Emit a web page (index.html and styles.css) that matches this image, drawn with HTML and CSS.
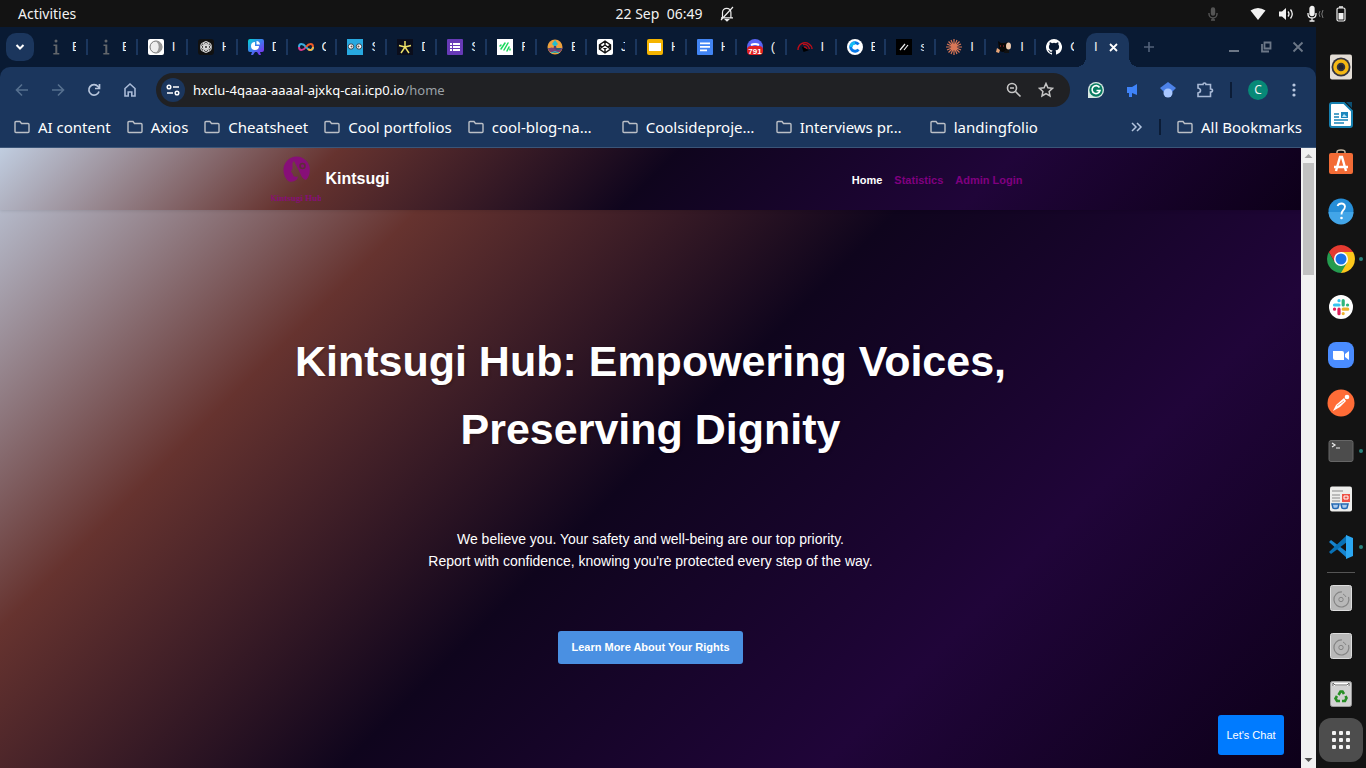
FILE: index.html
```
<!DOCTYPE html>
<html lang="en">
<head>
<meta charset="utf-8">
<title>Kintsugi Hub</title>
<link rel="stylesheet" href="styles.css">
</head>
<body>
<header class="topbar">
  <button class="activities">Activities</button>
  <div class="clock"><span>22 Sep&nbsp; 06:49</span>
    <svg width="14" height="16" viewBox="0 0 14 16" fill="none" stroke="#eee" stroke-width="1.2"><path d="M2.500 11.500V6.500a4.200 4.200 0 0 1 8.400 0v5M1 11.800h12M13 1 1 14"/><path d="M5.500 13.500h3l-1.500 1.500z" fill="#eee"/></svg>
  </div>
  <div class="status">
    <svg class="mic-dim" width="12" height="16" viewBox="0 0 12 16" fill="none" stroke="#555" stroke-width="1.4"><rect x="4.500" y="2" width="3" height="7" rx="1.500" fill="#555"/><path d="M2 7v1a4 4 0 0 0 8 0V7M6 12v2M4 14h4"/></svg>
    <svg width="16" height="16" viewBox="0 0 16 16" fill="#f2f2f2"><path d="M8 14 .5 4.500Q8-.5 15.500 4.500z"/></svg>
    <svg width="16" height="16" viewBox="0 0 16 16" fill="none" stroke="#f2f2f2" stroke-width="1.300"><path d="M1 5.500h3L8 2v12L4 10.500H1z" fill="#f2f2f2" stroke="none"/><path d="M10 5.500q2 2.500 0 5M12.500 3.500q3.500 4.500 0 9"/></svg>
    <svg width="18" height="18" viewBox="0 0 18 18" fill="none" stroke="#f2f2f2" stroke-width="1.300"><rect x="4" y="1.500" width="4" height="9" rx="2" fill="#f2f2f2"/><path d="M2 8v1q0 4 4 4t4-4V8M6 13v3M3.500 16h5"/><path d="M14 6q-2 3 0 6M17 5q-2.500 4 0 8" stroke="#777" stroke-width="1"/></svg>
    <svg width="10" height="16" viewBox="0 0 10 16" fill="none" stroke="#f2f2f2" stroke-width="1.200"><rect x="1" y="2" width="8" height="13" rx="1.500"/><path d="M3 1h4" stroke-width="1.500"/><path d="M2.500 7h5v6.500h-5z" fill="#f2f2f2" stroke="none"/></svg>
  </div>
</header>

<div class="desktop">
<div class="browser">
  <div class="tabstrip">
    <button class="tab-search" aria-label="Search tabs"><svg width="10" height="8" viewBox="0 0 10 8" fill="none" stroke="#fff" stroke-width="2"><path d="m1.500 2 3.500 3.500L8.500 2"/></svg></button>
    <div class="tabs">
      <div class="tab"><svg viewBox="0 0 16 16" fill="#62666b"><circle cx="8" cy="2" r="1.500"/><path d="M5.500 5.500h3.800V14h2v1.500h-6V14h2V7H5.500z"/></svg><span>E</span></div>
      <div class="tab"><svg viewBox="0 0 16 16" fill="#62666b"><circle cx="8" cy="2" r="1.500"/><path d="M5.500 5.500h3.800V14h2v1.500h-6V14h2V7H5.500z"/></svg><span>E</span></div>
      <div class="tab"><svg viewBox="0 0 16 16"><rect width="16" height="16" rx="2" fill="#fff"/><circle cx="8" cy="8" r="6" fill="#eee" stroke="#777"/><path d="M8 2a6 6 0 0 1 0 12 8 8 0 0 0 0-12z" fill="#999"/></svg><span>I</span></div>
      <div class="tab"><svg viewBox="0 0 16 16" fill="none" stroke="#ddd" stroke-width="1"><rect width="16" height="16" rx="3" fill="#111" stroke="none"/><ellipse cx="8" cy="6" rx="3" ry="3.500"/><ellipse cx="8" cy="6" rx="3" ry="3.500" transform="rotate(60 8 8)"/><ellipse cx="8" cy="6" rx="3" ry="3.500" transform="rotate(120 8 8)"/><ellipse cx="8" cy="6" rx="3" ry="3.500" transform="rotate(180 8 8)"/><ellipse cx="8" cy="6" rx="3" ry="3.500" transform="rotate(240 8 8)"/><ellipse cx="8" cy="6" rx="3" ry="3.500" transform="rotate(300 8 8)"/></svg><span>H</span></div>
      <div class="tab"><svg viewBox="0 0 16 16"><defs><linearGradient id="pie" x1="0" y1="0" x2="1" y2="1"><stop offset="0" stop-color="#00d5d0"/><stop offset=".5" stop-color="#4278f0"/><stop offset="1" stop-color="#8a22ef"/></linearGradient></defs><path d="M2 0h12q2 0 2 2v9q0 2-2 2h-2l1 3h-2l-2-3H7l-2 3H3l1-3H2q-2 0-2-2V2q0-2 2-2z" fill="url(#pie)"/><path d="M7 3v4h4a4 4 0 1 1-4-4z" fill="#fff"/><path d="M8.500 2a4 4 0 0 1 3.500 3.500H8.500z" fill="#fff"/></svg><span>D</span></div>
      <div class="tab"><svg viewBox="0 0 16 16" fill="none" stroke-width="2"><path d="M8 8c-3 4-7 4-7 0" stroke="#d83b8c"/><path d="M1 8c0-4 4-4 7 0s7 4 7 0" stroke="#3aaee0"/><path d="M8 8c3-4 7-4 7 0" stroke="#ec5a28"/><path d="M15 8c0 3-3 4-5 2" stroke="#f6b33d"/></svg><span>C</span></div>
      <div class="tab"><svg viewBox="0 0 16 16"><path fill="#28a9e0" d="M0 0h16v16H0z"/><g fill="#fff" stroke="#345"><circle cx="4" cy="7.500" r="2.700"/><circle cx="12" cy="7.500" r="2.700"/></g><circle cx="4.500" cy="7.500" r="1" fill="#654"/><circle cx="11.500" cy="7.500" r="1" fill="#654"/></svg><span>S</span></div>
      <div class="tab"><svg viewBox="0 0 16 16"><path fill="#0a0d1b" d="M0 0h16v16H0z"/><path d="M8 2v6M2 6.500 8 8l6-1.500M4 14l4-6 4 6" fill="none" stroke="#eee268" stroke-width="1.500"/></svg><span>D</span></div>
      <div class="tab"><svg viewBox="0 0 16 16"><rect width="16" height="16" rx="1" fill="#673ab7"/><path d="M3 4h2v2H3zm3 0h7v2H6zM3 7h2v2H3zm3 0h7v2H6zm-3 3h2v2H3zm3 0h7v2H6z" fill="#fff"/></svg><span>S</span></div>
      <div class="tab"><svg viewBox="0 0 16 16"><path fill="#fff" d="M0 0h16v16H0z"/><path d="m3 7 1-1M4 10l4-6M7 11l4-7M10 12l2-4M13 11v-1" stroke="#17d95a" stroke-width="1.500" stroke-linecap="round"/></svg><span>F</span></div>
      <div class="tab"><svg viewBox="0 0 16 16"><circle cx="8" cy="8" r="7.500" fill="#efa23d"/><path d="M1 9h14a7.500 7.500 0 0 1-14 0z" fill="#265f75"/><path d="M8 1 5 5l3 3 3-3z" fill="#20bed0"/><path d="M7 7h2l1 4H6z" fill="#54416b"/><path d="M1 10q4-3 7 0t7-1-2 4H3z" fill="#793f77"/><path d="M4 14q4-3 8 0" stroke="#23c4c6" fill="none"/></svg><span>E</span></div>
      <div class="tab"><svg viewBox="0 0 16 16"><rect width="16" height="16" rx="2" fill="#fff"/><path d="m8 2 5.500 3.800v4.400L8 14l-5.500-3.800V5.800zM2.500 6 8 10l5.500-4M2.500 10 8 6l5.500 4M8 2v4M8 10v4" fill="none" stroke="#111" stroke-width="1.400"/></svg><span>J</span></div>
      <div class="tab"><svg viewBox="0 0 16 16"><rect width="16" height="16" rx="2" fill="#f5b400"/><path fill="#fff" d="M2 4h12v8H2z"/></svg><span>H</span></div>
      <div class="tab"><svg viewBox="0 0 16 16"><rect width="16" height="16" rx="1" fill="#4285f4"/><path d="M3 3.500h10v1.800H3zm0 3.500h10v1.800H3zm0 3.500h7v1.800H3z" fill="#fff"/></svg><span>H</span></div>
      <div class="tab"><svg viewBox="0 0 16 16"><circle cx="8" cy="8" r="8" fill="#5865f2"/><path d="M4 6q4-2 8 0" stroke="#fff" stroke-width="2" fill="none"/><rect y="7" width="16" height="9" rx="4" fill="#e02020"/><text class="badge" x="8" y="15" text-anchor="middle">791</text></svg><span>(</span></div>
      <div class="tab"><svg viewBox="0 0 16 16" fill="none" stroke="#bd0d19" stroke-width="1.400"><path d="M1 11a7 7 0 0 1 11-6q3 2 3 5M6 5.500q5-1 6.500 4.500M7 8q2 0 3 2"/><path d="m6 9 4 2-3 1z" fill="#000" stroke="#000"/></svg><span>I</span></div>
      <div class="tab"><svg viewBox="0 0 16 16"><circle cx="8" cy="8" r="8" fill="#fff"/><path d="M11.500 5.500a4.300 4.300 0 1 0 0 5" fill="none" stroke="#0878e8" stroke-width="3"/><path d="M4 8a4.300 4.300 0 0 1 4-4" fill="none" stroke="#15bdf4" stroke-width="3"/></svg><span>E</span></div>
      <div class="tab"><svg viewBox="0 0 16 16"><path fill="#000" d="M0 0h16v16H0z"/><path d="m4 11 5-6M8 11l4-5" stroke="#eee" stroke-width="1.200"/></svg><span>s</span></div>
      <div class="tab"><svg viewBox="0 0 16 16" stroke="#d97757" stroke-width="1.200"><path d="M8 0v16M0 8h16M2.500 2.500l11 11M13.500 2.500l-11 11M5 1l6 14M11 1 5 15M1 5l14 6M1 11l14-6"/></svg><span>I</span></div>
      <div class="tab"><svg viewBox="0 0 16 16"><path d="m2 2 3 2h4l3-1v7q-2 3-5 3t-4-3z" fill="#080706"/><ellipse cx="12.500" cy="7" rx="2.500" ry="3.500" fill="#ecc8ac"/><path d="m1 9 3 2-1 3-3-1z" fill="#e8a577"/><path d="M4 7h1M7 7h1" stroke="#b33"/><path d="M9 11h4v3H8z" fill="#111"/></svg><span>I</span></div>
      <div class="tab"><svg viewBox="0 0 16 16"><path fill="#fff" d="M8 0a8 8 0 0 0-2.530 15.590c.4.070.55-.17.55-.38v-1.490c-2.230.48-2.700-.94-2.700-.94-.36-.92-.89-1.170-.89-1.170-.73-.5.050-.49.050-.49.810.06 1.230.83 1.230.83.720 1.230 1.880.87 2.340.67.070-.52.280-.88.510-1.080-1.780-.2-3.650-.89-3.650-3.950 0-.88.310-1.590.82-2.150-.08-.2-.36-1.020.08-2.120 0 0 .67-.22 2.200.82a7.600 7.600 0 0 1 4 0c1.530-1.040 2.200-.82 2.200-.82.440 1.100.160 1.920.080 2.120.510.560.820 1.270.820 2.150 0 3.070-1.870 3.750-3.650 3.950.290.250.540.730.540 1.480v2.190c0 .21.150.46.550.38A8 8 0 0 0 8 0z"/></svg><span>C</span></div>
    </div>
    <div class="tab-active"><span>I</span><button aria-label="Close tab"><svg width="9" height="9" viewBox="0 0 9 9" stroke="#fff" stroke-width="1.800"><path d="m1 1 7 7M8 1 1 8"/></svg></button></div>
    <button class="new-tab" aria-label="New tab"><svg width="12" height="12" viewBox="0 0 12 12" stroke="#53627a" stroke-width="1.600"><path d="M6 1v10M1 6h10"/></svg></button>
    <div class="window-buttons">
      <button aria-label="Minimise"><svg width="12" height="12" viewBox="0 0 12 12"><path d="M1 9h10v2H1z" fill="#6c7787"/></svg></button>
      <button aria-label="Restore"><svg width="12" height="12" viewBox="0 0 12 12" fill="none" stroke="#6c7787" stroke-width="1.800"><path d="M4.500 1.500h6v6h-6z"/><path d="M2 3v7.500h7"/></svg></button>
      <button aria-label="Close window"><svg width="12" height="12" viewBox="0 0 12 12" stroke="#6c7787" stroke-width="1.800"><path d="m1.500 1.500 9 9M10.500 1.500l-9 9"/></svg></button>
    </div>
  </div>

  <div class="chrome">
    <div class="toolbar">
      <div class="nav-buttons">
        <button aria-label="Back"><svg width="16" height="16" viewBox="0 0 16 16" fill="none" stroke="#56708f" stroke-width="1.600"><path d="M14 8H3M8 2.500 2.500 8 8 13.500"/></svg></button>
        <button aria-label="Forward"><svg width="16" height="16" viewBox="0 0 16 16" fill="none" stroke="#56708f" stroke-width="1.600"><path d="M2 8h11M8 2.500 13.500 8 8 13.500"/></svg></button>
        <button aria-label="Reload"><svg width="16" height="16" viewBox="0 0 16 16" fill="none" stroke="#b8c6dc" stroke-width="1.700"><path d="M13 9.500A5.200 5.200 0 1 1 12 4.500L13.500 6M13.500 2v4.500H9"/></svg></button>
        <button aria-label="Home"><svg width="16" height="16" viewBox="0 0 16 16" fill="none" stroke="#a9bad6" stroke-width="1.600"><path d="M3 6.500 8 2l5 4.500V14H9.800v-4H6.200v4H3z"/></svg></button>
      </div>
      <div class="omnibox">
        <button class="site-info" aria-label="Site information"><svg width="14" height="12" viewBox="0 0 14 12" fill="none" stroke="#fff" stroke-width="1.500"><circle cx="3" cy="3" r="1.800"/><path d="M7 3h6M1 9h6"/><circle cx="11" cy="9" r="1.800"/></svg></button>
        <div class="url" role="textbox" aria-label="Address" tabindex="0">hxclu-4qaaa-aaaal-ajxkq-cai.icp0.io<span>/home</span></div>
        <button aria-label="Zoom"><svg width="16" height="16" viewBox="0 0 16 16" fill="none" stroke="#c7c7c7" stroke-width="1.600"><circle cx="6" cy="6" r="4.500"/><path d="m9.500 9.500 5 5M4 6h4"/></svg></button>
        <button aria-label="Bookmark this page"><svg width="16" height="16" viewBox="0 0 16 16" fill="none" stroke="#c7c7c7" stroke-width="1.500"><path d="m8 1.500 1.900 4.300 4.600.5-3.400 3.100.9 4.600-4-2.300L4 14l.9-4.600L1.500 6.300l4.600-.5z"/></svg></button>
      </div>
      <div class="extensions">
        <button aria-label="Grammarly"><svg width="16" height="16" viewBox="0 0 16 16"><path d="M0 16V8a8 8 0 1 1 8 8z" fill="#d8e9e3"/><circle cx="8" cy="8" r="6.700" fill="#087b61"/><path d="M11.500 5.500a4 4 0 1 0 .5 3H8.500" fill="none" stroke="#fff" stroke-width="1.600"/></svg></button>
        <button aria-label="Announcements"><svg width="16" height="16" viewBox="0 0 16 16" fill="#3f83f8"><path d="M3 5h5l5-3v11l-5-2v4H5v-4H3z"/></svg></button>
        <button aria-label="Scholar"><svg width="16" height="16" viewBox="0 0 16 16"><path d="m8 0 8 6-4 4H4L0 6z" fill="#4d82e8"/><circle cx="8" cy="11" r="4.500" fill="#a8c7ff"/></svg></button>
        <button aria-label="Extensions"><svg width="18" height="18" viewBox="0 0 18 18" fill="none" stroke="#a9bad6" stroke-width="1.600"><path d="M2 3.500h5q0-1.500 1.500-1.500T10 3.500h4.500V8q2 0 2 1.500t-2 1.500v4.500H2V12q2.500-.5 2.500-2.500T2 7z"/></svg></button>
        <span class="divider"></span>
        <button class="avatar" aria-label="Profile">C</button>
        <button class="menu" aria-label="Menu"><svg width="4" height="16" viewBox="0 0 4 16" fill="#b8c7df"><circle cx="2" cy="3" r="1.600"/><circle cx="2" cy="8" r="1.600"/><circle cx="2" cy="13" r="1.600"/></svg></button>
      </div>
    </div>
    <nav class="bookmarks" aria-label="Bookmarks">
      <svg class="symbols" width="0" height="0"><symbol id="folder" viewBox="0 0 16 14"><path d="M1 2.500q0-1 1-1h4l1.500 2H14q1 0 1 1v7q0 1-1 1H2q-1 0-1-1z" fill="none" stroke="#bcc0c7" stroke-width="1.400"/></symbol></svg>
      <a href="#"><svg><use href="#folder"/></svg>AI content</a>
      <a href="#"><svg><use href="#folder"/></svg>Axios</a>
      <a href="#"><svg><use href="#folder"/></svg>Cheatsheet</a>
      <a href="#"><svg><use href="#folder"/></svg>Cool portfolios</a>
      <a class="wide" href="#"><svg><use href="#folder"/></svg>cool-blog-na…</a>
      <a class="wide" href="#"><svg><use href="#folder"/></svg>Coolsideproje…</a>
      <a class="wide" href="#"><svg><use href="#folder"/></svg>Interviews pr…</a>
      <a href="#"><svg><use href="#folder"/></svg>landingfolio</a>
      <button class="more" aria-label="More bookmarks"><svg width="12" height="10" viewBox="0 0 12 10" fill="none" stroke="#b4c5df" stroke-width="1.500"><path d="m1 1 4 4-4 4M6 1l4 4-4 4"/></svg></button>
      <span class="divider"></span>
      <a class="all" href="#"><svg><use href="#folder"/></svg>All Bookmarks</a>
    </nav>
  </div>

  <div class="viewport">
    <div class="page">
      <header class="site-header">
        <div class="site-header-inner">
          <a class="brand" href="#">
            <svg width="50" height="50" viewBox="0 0 50 50"><path d="M25.500 2.500A13.300 13.300 0 0 0 12.500 17Q13 24 18 27.500q4 1 8-2l1-3q-5 1-5-2l-2-3 1.500-3V9l1.500-2 6 12q2 6 6 7 4-4 3.800-10.500A13.300 13.300 0 0 0 25.500 2.500z" fill="#870f78"/><circle cx="31.500" cy="12" r="2.500" fill="none" stroke="#5d2e38" stroke-width="1.500"/><text class="logo-text" x="25" y="47" text-anchor="middle">Kintsugi Hub</text></svg>
            <span>Kintsugi</span>
          </a>
          <nav class="site-nav" aria-label="Main"><a class="current" href="#">Home</a><a href="#">Statistics</a><a href="#">Admin Login</a></nav>
        </div>
      </header>
      <main class="hero">
        <h1>Kintsugi Hub: Empowering Voices, Preserving Dignity</h1>
        <p>We believe you. Your safety and well-being are our top priority.<br>Report with confidence, knowing you're protected every step of the way.</p>
        <a class="cta" href="#">Learn More About Your Rights</a>
      </main>
      <button class="chat">Let's Chat</button>
    </div>
    <div class="scrollbar" aria-hidden="true">
      <svg width="15" height="15" viewBox="0 0 15 15"><path d="m3.500 10 4-4 4 4z" fill="#a3a3a3"/></svg>
      <div class="track"><div class="thumb"></div></div>
      <svg width="15" height="15" viewBox="0 0 15 15"><path d="m3.500 5 4 4 4-4z" fill="#505050"/></svg>
    </div>
  </div>
</div>

<aside class="dock">
  <button aria-label="Rhythmbox"><svg viewBox="0 0 32 32"><rect x="5" y="3.500" width="22" height="25" rx="2" fill="#e3ddd5"/><circle cx="16" cy="16" r="9.500" fill="#33333d"/><circle cx="16" cy="16" r="6" fill="none" stroke="#f4b814" stroke-width="3.500"/><circle cx="16" cy="16" r="2.500" fill="#22222a"/></svg></button>
  <button aria-label="LibreOffice Writer"><svg viewBox="0 0 32 32"><path d="M7 4h12l8 8v14q0 2-2 2H7q-2 0-2-2V6q0-2 2-2z" fill="#fff" stroke="#1680b0" stroke-width="2"/><path d="M21 3h6v6z" fill="#0d4e70"/><path d="M9 15h5M9 18h5M9 21h14M9 24h10" stroke="#1683b8" stroke-width="1.500"/><path d="M16 13h7v6h-7z" fill="#1c87bd"/><path d="m17 18 2-3 3 3z" fill="#bde5f5"/></svg></button>
  <button aria-label="Software"><svg viewBox="0 0 32 32"><path d="M12 7V5q0-2 4-2t4 2v2" fill="none" stroke="#c7b8a1" stroke-width="1.500"/><rect x="4" y="6" width="24" height="21" rx="2" fill="#f36c36"/><path d="m11 24 4-14h2l4 14M9 20h14" fill="none" stroke="#fff" stroke-width="2.400"/></svg></button>
  <button aria-label="Help"><svg viewBox="0 0 32 32"><circle cx="16" cy="16" r="12.500" fill="#268ed8"/><path d="M3.500 17h25a12.500 12.500 0 0 1-25 0z" fill="#42a5e8"/><path d="M12.500 11q1-2.500 4-2.500t3.500 3q0 2-2 4-1.500 1.500-1.500 4" fill="none" stroke="#fff" stroke-width="1.800"/><circle cx="16.500" cy="23" r="1.300" fill="#fff"/></svg></button>
  <button class="running" aria-label="Chrome"><svg viewBox="0 0 32 32"><path d="M16 16V9h12.100A14 14 0 0 1 16 30z" fill="#fcc71b"/><path d="m16 16 6 3.500L16 30A14 14 0 0 1 3.900 9l6 10.500z" fill="#249b4f"/><path d="M3.900 9A14 14 0 0 1 28.100 9H16l-6 10.500z" fill="#e53a30"/><circle cx="16" cy="16" r="7" fill="#fff"/><circle cx="16" cy="16" r="5.500" fill="#1a73e8"/></svg></button>
  <button aria-label="Slack"><svg viewBox="0 0 32 32"><circle cx="16" cy="16" r="12" fill="#fff"/><g stroke-width="3.200" stroke-linecap="round"><path d="M9.500 14h4.500M14 9.500v.2" stroke="#36c5f0"/><path d="M18.200 9.500V14M22.500 14h.1" stroke="#2eb67d"/><path d="M18.200 18.200h4.500M18.200 22.500v.1" stroke="#ecb22e"/><path d="M14 18.200v4.500M9.500 18.200h.1" stroke="#e01e5a"/></g></svg></button>
  <button aria-label="Zoom"><svg viewBox="0 0 32 32"><rect x="3" y="3" width="26" height="26" rx="8" fill="#4a8cff"/><path d="M8 12h9q2 0 2 2v7h-9q-2 0-2-2zM20 15l4-3v9l-4-3z" fill="#fff"/></svg></button>
  <button aria-label="Postman"><svg viewBox="0 0 32 32"><circle cx="16" cy="16" r="13.500" fill="#ff6c37"/><circle cx="22" cy="10" r="2.300" fill="#fff"/><path d="m8 24 3-6 8-7 2 3-6 6z" fill="#fff"/><path d="m12 19 7-5" stroke="#ff9a72"/></svg></button>
  <button class="running" aria-label="Terminal"><svg viewBox="0 0 32 32"><rect x="4" y="5.500" width="24" height="21" rx="2" fill="#4c4c4c" stroke="#666"/><path d="m7 8 3 2-3 2M11 13h4" fill="none" stroke="#eee" stroke-width="1.200"/></svg></button>
  <button aria-label="Document viewer"><svg viewBox="0 0 32 32"><rect x="5" y="3.500" width="22" height="25" rx="2" fill="#ededeb"/><path d="M7 8h11M7 12h8M7 15h8M7 18h8" stroke="#aaa" stroke-width="1.300"/><path d="M17 11h8v8h-8z" fill="#ee5145"/><path d="M19 13h4v3h-4z" stroke="#fff" fill="none"/><g fill="#aac9ed" stroke="#2368b2" stroke-width="1.500"><path d="M7 21h7l-1 4q-4 1-5 0zM16 21h7l-1 4q-4 1-5 0z"/></g></svg></button>
  <button class="running" aria-label="Visual Studio Code"><svg viewBox="0 0 32 32"><path d="m4 11 2-2 16 12v6z" fill="#1684cf"/><path d="m4 21 2 2 16-12V4z" fill="#0871b6"/><path d="m21 4 7 3v18l-7 3z" fill="#2ba7f2"/></svg></button>
  <hr>
  <button aria-label="Disk 1"><svg viewBox="0 0 32 32"><rect x="5.500" y="3.500" width="21" height="25" rx="2" fill="#b8b8b8" stroke="#ddd"/><path d="M17 10a7.500 7.500 0 1 0 6.500 5" fill="none" stroke="#858585" stroke-width="1.200"/><path d="M18 12q2 1 3 3" fill="none" stroke="#858585"/><circle cx="16" cy="17.500" r="2.200" fill="none" stroke="#858585"/></svg></button>
  <button aria-label="Disk 2"><svg viewBox="0 0 32 32"><rect x="5.500" y="3.500" width="21" height="25" rx="2" fill="#b8b8b8" stroke="#ddd"/><path d="M17 10a7.500 7.500 0 1 0 6.500 5" fill="none" stroke="#858585" stroke-width="1.200"/><path d="M18 12q2 1 3 3" fill="none" stroke="#858585"/><circle cx="16" cy="17.500" r="2.200" fill="none" stroke="#858585"/></svg></button>
  <button aria-label="Trash"><svg viewBox="0 0 32 32"><rect x="5.500" y="3.500" width="21" height="25" rx="2" fill="#d2d2d2" stroke="#999"/><path d="M8 5h16v3H8z" fill="#fff"/><path d="M8 8V5l2 2h12l2-2v3" fill="none" stroke="#666"/><g fill="none" stroke="#278e25" stroke-width="2.600"><path d="m13.500 17 2-3.500h2l1.500 2.500"/><path d="m20.500 18 1 2-1.500 3h-3"/><path d="M15 23h-3l-1.500-2.500 1.500-2.500"/></g></svg></button>
  <button class="apps" aria-label="Show applications"><svg viewBox="0 0 32 32" fill="#f2f2f2"><rect x="7" y="7" width="4" height="4" rx="1"/><rect x="14" y="7" width="4" height="4" rx="1"/><rect x="21" y="7" width="4" height="4" rx="1"/><rect x="7" y="14" width="4" height="4" rx="1"/><rect x="14" y="14" width="4" height="4" rx="1"/><rect x="21" y="14" width="4" height="4" rx="1"/><rect x="7" y="21" width="4" height="4" rx="1"/><rect x="14" y="21" width="4" height="4" rx="1"/><rect x="21" y="21" width="4" height="4" rx="1"/></svg></button>
</aside>
</div>
</body>
</html>
```
FILE: styles.css
```
* { box-sizing: border-box; }
body {
  margin: 0;
  height: 100vh;
  display: flex;
  flex-direction: column;
  overflow: hidden;
  background: #131313;
  color: #f2f2f2;
  font: 14px/20px "Noto Sans", "Open Sans", sans-serif;
}
button {
  display: flex;
  align-items: center;
  justify-content: center;
  padding: 0;
  border: 0;
  background: none;
  color: inherit;
  font: inherit;
}
a { color: inherit; text-decoration: none; }
svg { display: block; flex: none; }

/* System bar */
.topbar {
  flex: none;
  display: grid;
  grid-template-columns: 1fr auto 1fr;
  align-items: center;
  height: 27px;
  padding: 0 20px 0 18px;
}
.activities { justify-self: start; }
.clock { display: flex; align-items: center; gap: 18px; padding-right: 14px; }
.status { display: flex; align-items: center; justify-self: end; gap: 12px; }
.mic-dim { margin-right: 19px; }

.desktop { flex: 1; display: flex; min-height: 0; }
.browser { flex: 1; display: flex; flex-direction: column; min-width: 0; background: #091a33; }

/* Tabs */
.tabstrip { flex: none; display: flex; align-items: center; height: 40px; padding: 0 6px; }
.tab-search { width: 28px; height: 28px; border-radius: 10px; background: #1b365d; }
.tabs { display: flex; flex: 0 1 1048px; margin-left: 4px; min-width: 0; }
.tab {
  flex: 1 1 0;
  display: flex;
  align-items: center;
  gap: 8px;
  height: 16px;
  padding-left: 10px;
  border-right: 2px solid #1b365d;
  overflow: hidden;
}
.tab:last-child { border-color: transparent; }
.tab svg { width: 16px; height: 16px; }
.tab span, .tab-active span {
  width: 4px;
  overflow: hidden;
  font: 13px/16px "Liberation Sans", Arial, sans-serif;
}
.badge { fill: #fff; font: bold 8px "Liberation Sans", Arial, sans-serif; }
.tab-active {
  position: relative;
  align-self: flex-end;
  display: flex;
  align-items: center;
  gap: 11px;
  width: 43px;
  height: 34px;
  padding: 0 8px 6px;
  border-radius: 10px 10px 0 0;
  background: #1b365d;
}
.tab-active::before, .tab-active::after {
  content: "";
  position: absolute;
  bottom: 0;
  width: 10px;
  height: 10px;
}
.tab-active::before { right: 100%; background: radial-gradient(circle at 0 0, #091a33 10px, #1b365d 10px); }
.tab-active::after { left: 100%; background: radial-gradient(circle at 100% 0, #091a33 10px, #1b365d 10px); }
.new-tab { margin-left: 14px; }
.window-buttons { display: flex; gap: 20px; margin-left: auto; padding-right: 6px; }

/* Toolbar */
.chrome { flex: none; border-bottom: 1px solid #3b5578; border-radius: 10px 10px 0 0; background: #1b365d; }
.toolbar { display: flex; align-items: center; height: 46px; padding: 0 20px 0 14px; }
.nav-buttons { display: flex; gap: 20px; margin-right: 18px; }
.omnibox {
  flex: 1;
  display: flex;
  align-items: center;
  gap: 16px;
  height: 34px;
  padding: 0 16px 0 5px;
  border-radius: 17px;
  background: #202124;
}
.site-info { width: 24px; height: 24px; border-radius: 50%; background: #1b365d; }
.url { flex: 1; margin-left: -8px; color: #fff; font-size: 13px; }
.url span { color: #9aa0a6; }
.extensions { display: flex; align-items: center; gap: 20px; margin-left: 18px; }
.divider { width: 2px; height: 16px; background: #0b1c36; }
.extensions .divider { margin: 0 -4px; }
.avatar { width: 20px; height: 20px; border-radius: 50%; background: #078977; font-size: 12px; }
.menu { margin-left: 4px; }
.bookmarks { display: flex; align-items: center; height: 34px; padding: 0 14px 6px; color: #fff; font-size: 15px; }
.symbols { position: absolute; }
.bookmarks a { display: flex; align-items: center; gap: 8px; margin-right: 16px; white-space: nowrap; }
.bookmarks a svg { width: 16px; height: 14px; }
.bookmarks .wide { width: 138px; }
.bookmarks .more { margin-left: auto; }
.bookmarks .divider { margin: 0 16px; }
.bookmarks .all { margin-right: 0; }

/* Web page */
.viewport { flex: 1; display: flex; min-height: 0; }
.page {
  position: relative;
  flex: 1;
  overflow: hidden;
  color: #fff;
  font-family: "Liberation Sans", Arial, sans-serif;
}
.page, .site-header {
  background: linear-gradient(135deg, #c0cde0, #66332f 25%, #0f051d 50%, #200539 75%, #0d0019);
}
.site-header {
  padding: 6px 20px;
  box-shadow: 0 1px 3px rgba(0, 0, 0, 0.1);
}
.site-header-inner {
  display: flex;
  align-items: center;
  justify-content: space-between;
  max-width: 760px;
  margin: 0 auto;
  padding-right: 8px;
}
.brand { display: flex; align-items: center; gap: 5px; font-size: 16px; font-weight: bold; }
.logo-text { fill: #870f78; font: bold 9px "Liberation Serif", "Times New Roman", serif; }
.site-nav { display: flex; gap: 12px; padding-top: 2px; color: #800080; font-size: 11px; font-weight: bold; }
.site-nav .current { color: #fff; }
.hero { display: flex; flex-direction: column; align-items: center; padding: 117px 20px 104px; text-align: center; }
.hero h1 { max-width: 800px; margin: 0; font-size: 43px; line-height: 68px; text-shadow: 1px 1px 3px rgba(0, 0, 0, 0.3); }
.hero p { margin: 65px 0 59px; font-size: 14px; line-height: 22px; }
.cta { padding: 6px 13px 7px; border-radius: 3px; background: #4a90e2; font-size: 11px; font-weight: bold; }
.chat {
  position: absolute;
  right: 17px;
  bottom: 13px;
  width: 66px;
  height: 40px;
  border-radius: 3px;
  background: #007bff;
  font-size: 11px;
}
.scrollbar { display: flex; flex-direction: column; width: 15px; background: #f1f1f1; }
.track { flex: 1; padding: 0 2px; }
.thumb { height: 19%; background: #c1c1c1; }

/* Dock */
.dock { flex: none; display: flex; flex-direction: column; align-items: center; gap: 16px; width: 50px; padding-top: 24px; }
.dock button { position: relative; flex: none; width: 32px; height: 32px; }
.dock button svg { width: 32px; height: 32px; }
.dock .running::after {
  content: "";
  position: absolute;
  right: -6px;
  width: 4px;
  height: 4px;
  border-radius: 50%;
  background: #2a837c;
}
.dock hr { width: 28px; height: 1px; margin: -7px 0 -7px; border: 0; background: #555; }
.dock .apps { width: 44px; height: 44px; margin-top: -8px; border-radius: 12px; background: #4d4d4d; }
```
